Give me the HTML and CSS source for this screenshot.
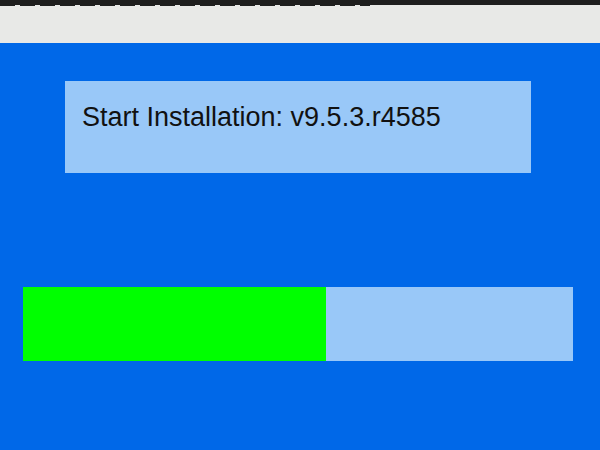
FILE: index.html
```html
<!DOCTYPE html>
<html lang="en">
<head>
  <meta charset="UTF-8" />
  <meta name="viewport" content="width=device-width, initial-scale=1.0" />
  <title>Installer</title>
  <link rel="stylesheet" href="styles.css">
</head>
<body>
  <header class="topbar">
    <div class="topbar-edge">
      <span class="edge-dashes"></span>
    </div>
  </header>

  <main class="screen">
    <div class="message">
      <p>Start Installation: v9.5.3.r4585</p>
    </div>

    <div class="progress">
      <div class="progress-fill" style="width: 55%;"></div>
    </div>
  </main>
</body>
</html>
```

FILE: styles.css
```css
html, body {
  margin: 0;
  height: 100%;
}
body {
  font-family: "Liberation Sans", Arial, sans-serif;
  background-color: #0068e8;
  overflow: hidden;
}
.topbar {
  height: 43px;
  background-color: #e8e9e7;
}
.topbar-edge {
  height: 5px;
  background-color: #1e1e1e;
}
.edge-dashes {
  display: block;
  width: 370px;
  height: 6px;
  background-image: repeating-linear-gradient(90deg, #1e1e1e 0 15px, transparent 15px 20px);
}
.screen {
  padding-top: 38px;
}
.message {
  margin-left: 65px;
  width: 466px;
  height: 92px;
  background-color: #99c8f8;
  box-sizing: border-box;
  padding: 21px 0 0 17px;
}
.message p {
  margin: 0;
  font-size: 27px;
  color: #111;
}
.progress {
  margin: 114px 0 0 23px;
  width: 550px;
  height: 74px;
  background-color: #99c8f8;
}
.progress-fill {
  height: 100%;
  background-color: #00ff00;
}
```
